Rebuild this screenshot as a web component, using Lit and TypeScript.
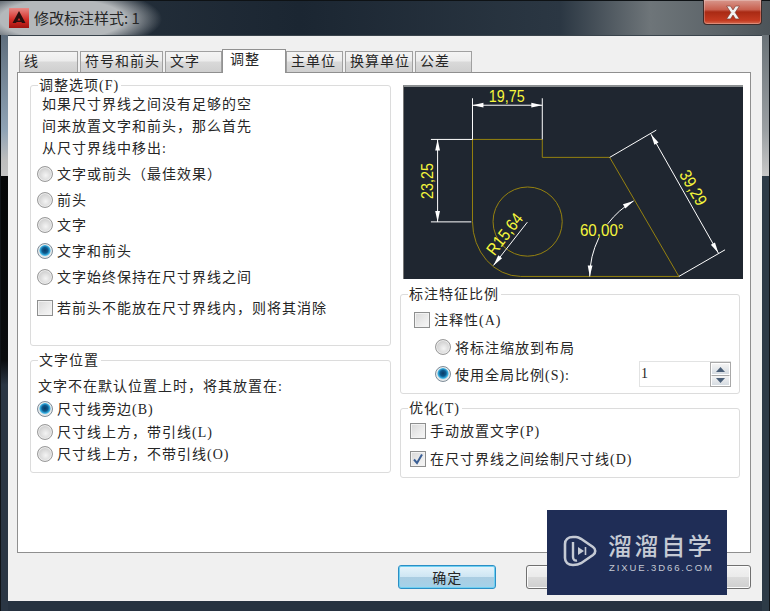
import { LitElement, html, css, svg } from "lit";
import { customElement } from "lit/decorators.js";

const TABS = [
  { label: "线", w: 59, gap: 2 },
  { label: "符号和前头", w: 83, gap: 2 },
  { label: "文字", w: 57, gap: 0 },
  { label: "调整", w: 64, gap: 0, active: true },
  { label: "主单位", w: 57, gap: 2 },
  { label: "换算单位", w: 68, gap: 2 },
  { label: "公差", w: 57, gap: 0 },
];

const arrow = (x: number, y: number, deg: number) =>
  svg`<polygon class="arr" points="0,0 -11,-2.4 -11,2.4" transform="translate(${x} ${y}) rotate(${deg})"></polygon>`;

@customElement("app-root")
export class AppRoot extends LitElement {
  static styles = css`
    :host {
      display: block;
      width: 770px;
      height: 611px;
      overflow: hidden;
      font-family: "Liberation Serif", "Noto Sans CJK SC", serif;
      font-size: 14px;
      letter-spacing: 1px;
      color: #262626;
    }
    * { box-sizing: border-box; }
    .window {
      position: relative;
      width: 770px;
      height: 611px;
      display: flex;
      flex-direction: column;
      background:
        linear-gradient(#101418 0 0) left / 1px 100% no-repeat,
        linear-gradient(#101418 0 0) right / 1px 100% no-repeat,
        linear-gradient(to bottom, transparent 0 35px, #5e6d7c 35px, #8fa3b5 130px, #bdbdbd 160px, #c4c4c4 176px, #050607 176px, #0a0c0e 360px, #2a3644 385px, #2a3644 100%) left / 8px 100% no-repeat,
        linear-gradient(to bottom, transparent 0 35px, #6b7378 35px, #9a9fa2 130px, #c8c8c8 176px, #2d3b47 176px, #2d3b47 100%) right / 8px 100% no-repeat,
        #263240;
    }
    .title {
      height: 35px;
      flex: none;
      display: flex;
      align-items: center;
      padding: 0 8px 0 9px;
      border-top: 1px solid #0e1215;
      background:
        radial-gradient(ellipse 100px 32px at 62px 18px, #b4b8bb 0 62%, rgba(180, 184, 187, 0) 100%),
        linear-gradient(to right, #28333e 0, #1b2632 300px, #2b3743 560px, #6e7579 650px, #5c6469 720px, #4c5459 770px);
    }
    .logo { width: 20px; height: 20px; flex: none; display: block; }
    .cap {
      margin-left: 5px;
      font-family: "Noto Sans CJK SC", sans-serif;
      font-size: 15px;
      letter-spacing: 0;
      color: #262626;
      line-height: 20px;
    }
    .close {
      margin-left: auto;
      align-self: flex-start;
      margin-top: -1px;
      width: 59px;
      height: 25px;
      border: 1px solid #3f2a28;
      border-top: none;
      border-radius: 0 0 4px 4px;
      box-shadow: inset 0 0 0 1px rgba(255, 255, 255, 0.25);
      background: linear-gradient(#d8978c 0, #c8604f 40%, #a92a14 50%, #c43a20 85%, #d66a50 100%);
      display: flex;
      align-items: center;
      justify-content: center;
    }
    .close svg { display: block; }
    .client {
      flex: 1;
      margin: 0 8px 10px;
      background: #f0f0f0;
      border-top: 1px solid #3a444c;
      padding: 13px 11px 0 9px;
      display: flex;
      flex-direction: column;
    }
    .tabs {
      display: flex;
      height: 24px;
      padding-left: 2px;
      flex: none;
      position: relative;
      z-index: 1;
    }
    .tab {
      height: 21px;
      margin-top: 2px;
      padding-left: 4px;
      line-height: 20px;
      white-space: nowrap;
      border: 1px solid #a0a0a0;
      border-bottom: none;
      background: linear-gradient(#f4f4f4 0, #ececec 45%, #d9d9d9 50%, #cfcfcf 100%);
    }
    .tab.active {
      height: 24px;
      margin-top: 0;
      padding-left: 7px;
      line-height: 19px;
      background: #fff;
      border-color: #919191;
    }
    .panel {
      height: 481px;
      margin-top: -1px;
      flex: none;
      border: 1px solid #8f8f8f;
      background: #fff;
      padding: 12px 0 0 12px;
      display: grid;
      grid-template-columns: 361px 340px;
      column-gap: 9px;
      align-content: start;
    }
    .col { display: flex; flex-direction: column; }
    .group {
      position: relative;
      border: 1px solid #dcdcdc;
      border-radius: 3px;
    }
    .legend {
      position: absolute;
      top: -10px;
      left: 7px;
      padding: 0 2px 0 1px;
      line-height: 20px;
      background: #fff;
      white-space: nowrap;
    }
    .g1 { height: 261px; padding-top: 8px; }
    .g2 { height: 113px; margin-top: 14px; padding-top: 15px; }
    .r1 { height: 100px; margin-top: 15px; padding-top: 12px; }
    .r2 { height: 70px; margin-top: 14px; padding-top: 8px; }
    .para { padding-left: 11px; line-height: 22px; white-space: nowrap; }
    .para2 { padding-left: 7px; line-height: 22px; white-space: nowrap; }
    .row {
      display: flex;
      align-items: center;
      gap: 4px;
      padding-left: 6px;
      white-space: nowrap;
    }
    .lbl { padding-bottom: 2px; }
    .in34 .lbl { padding-bottom: 0; }
    .h26 { height: 25.75px; }
    .h225 { height: 22.5px; }
    .h27 { height: 27px; }
    .h28 { height: 28px; }
    .first { margin-top: 1px; }
    .cbrow { margin-top: 5px; height: 26px; }
    .in13 { padding-left: 13px; }
    .in34 { padding-left: 34px; margin-top: 1px; }
    .in34 + .in34 { margin-top: 0; }
    .in9 { padding-left: 9px; }
    .radio {
      width: 16px;
      height: 16px;
      flex: none;
      border-radius: 50%;
      border: 1px solid #9a9a9a;
      background: radial-gradient(circle at 55% 60%, #f4f4f4 0, #d6d6d6 55%, #b8b8b8 100%);
      box-shadow: inset 0 0 0 1px #ececec;
    }
    .radio.on {
      border-color: #7f8d99;
      background: radial-gradient(circle at 50% 45%, #0b3c66 0, #0d5a8e 28%, #39b4e6 48%, #d8e4ea 58%, #dcdcdc 100%);
    }
    .check {
      width: 16px;
      height: 16px;
      flex: none;
      border: 1px solid #8e8f8f;
      background: linear-gradient(135deg, #d8d8d8 0, #ececec 60%, #f6f6f6 100%);
      box-shadow: inset 0 0 0 1px #f2f2f2;
      display: flex;
      align-items: center;
      justify-content: center;
    }
    .check svg { display: block; }
    .spin {
      margin-left: auto;
      margin-right: 8px;
      width: 92px;
      height: 26px;
      display: flex;
      border: 1px solid #e2e3e3;
      border-right: none;
      padding-left: 1px;
      line-height: 24px;
    }
    .spin span { flex: 1; }
    .stepper {
      width: 21px;
      height: 25px;
      flex: none;
      display: flex;
      flex-direction: column;
      border: 1px solid #a9a9a9;
    }
    .stepper i {
      flex: 1;
      display: flex;
      align-items: center;
      justify-content: center;
      background: linear-gradient(#f4f4f4, #d6dce2);
      border: 1px solid #fff;
    }
    .stepper i + i { border-top: 1px solid #a9a9a9; }
    .diagram {
      margin-left: 3px;
      width: 340px;
      height: 194px;
      display: block;
      background: #1f2630;
      border-top: 2px solid #8b8f91;
      border-left: 1px solid #777;
    }
    .oc { fill: none; stroke: #96820f; stroke-width: 1; }
    .dl { fill: none; stroke: #fff; stroke-width: 1; }
    .arr { fill: #fff; }
    .dt {
      fill: #f6f63c;
      font-family: "Liberation Sans", sans-serif;
      font-size: 17px;
      letter-spacing: 0;
      text-anchor: middle;
      dominant-baseline: middle;
    }
    .actions {
      display: flex;
      margin-top: 12px;
      padding-left: 381px;
      gap: 30px;
      flex: none;
    }
    .btn {
      width: 98px;
      height: 24px;
      border: 1px solid #707070;
      border-radius: 3px;
      background: linear-gradient(#f3f3f3 0, #ebebeb 48%, #dbdbdb 52%, #cfcfcf 100%);
      box-shadow: inset 0 0 0 1px #fbfbfb;
      text-align: center;
      text-indent: 1px;
      line-height: 22px;
      font-family: "Noto Sans CJK SC", sans-serif;
    }
    .btn.def {
      border-color: #2c8ec4;
      background: linear-gradient(#e6f4fb 0, #cfe6f3 48%, #aacde2 52%, #a4d2ea 100%);
      box-shadow: inset 0 0 0 1px #6fd0f2;
    }
    .water {
      position: absolute;
      left: 547px;
      top: 510px;
      width: 180px;
      height: 85px;
      background: #1f2d56;
      color: #c5cad4;
    }
    .water svg { position: absolute; left: 15px; top: 25px; display: block; }
    .wbig {
      position: absolute;
      left: 61px;
      top: 19px;
      font-family: "Noto Sans CJK SC", sans-serif;
      font-size: 24px;
      font-weight: 500;
      line-height: 32px;
      letter-spacing: 2.6px;
      white-space: nowrap;
    }
    .wsmall {
      position: absolute;
      left: 62px;
      top: 52px;
      font-family: "Liberation Sans", sans-serif;
      font-size: 9.5px;
      line-height: 12px;
      letter-spacing: 1.9px;
      white-space: nowrap;
    }
  `;

  private radio(label: string, on: boolean, cls: string) {
    return html`<div class="row ${cls}"><span class="radio ${on ? "on" : ""}"></span><span class="lbl">${label}</span></div>`;
  }

  private check(label: string, on: boolean, cls: string) {
    return html`<div class="row ${cls}">
      <span class="check">${on
        ? html`<svg width="12" height="12" viewBox="0 0 12 12"><path d="M2 6.5 L5 10 L10 1.5" fill="none" stroke="#3a5f95" stroke-width="2"></path></svg>`
        : ""}</span><span class="lbl">${label}</span>
    </div>`;
  }

  private diagram() {
    return html`<svg class="diagram" viewBox="403 87 340 192">
      <path class="oc" d="M471.7 139.3 H541.7 V157.3 H609.3 L678.7 276.7 H520 A48.5 55 0 0 1 471.7 221.7 Z"></path>
      <circle class="oc" cx="527" cy="221.7" r="34.7"></circle>
      <path class="dl" d="M471.7 98 V139.3 M541.7 98 V139.3 M471.7 105 H541.7 M430 139.3 H471.7 M430 222 H470.5 M436.7 139.3 V222
        M609.3 157.3 L656 130 M678.7 276.7 L725 250 M650.7 134 L718.3 253.3 M526.7 222.3 L492.7 265.7
        M633.3 201 A88 88 0 0 0 607.3 224 M598.3 238.3 A88 88 0 0 0 589.3 276.7"></path>
      ${arrow(471.7, 105, 180)}${arrow(541.7, 105, 0)}
      ${arrow(436.7, 139.3, 270)}${arrow(436.7, 222, 90)}
      ${arrow(650.7, 134, 240)}${arrow(718.3, 253.3, 60)}
      ${arrow(492.7, 265.7, 128)}
      ${arrow(633.3, 201, -30)}${arrow(589.3, 276.7, 92)}
      <text class="dt" x="506" y="97" textLength="36" lengthAdjust="spacingAndGlyphs">19,75</text>
      <text class="dt" transform="translate(427.5 181) rotate(-90)" textLength="36" lengthAdjust="spacingAndGlyphs">23,25</text>
      <text class="dt" transform="translate(692 188.5) rotate(60)" textLength="38" lengthAdjust="spacingAndGlyphs">39,29</text>
      <text class="dt" transform="translate(505 235) rotate(-52)" textLength="48" lengthAdjust="spacingAndGlyphs">R15,64</text>
      <text class="dt" x="601.5" y="232" textLength="44" lengthAdjust="spacingAndGlyphs">60,00°</text>
    </svg>`;
  }

  render() {
    return html`<div class="window">
      <div class="title">
        <svg class="logo" viewBox="0 0 20 20">
          <defs>
            <linearGradient id="lg" x1="0" y1="0" x2="0" y2="1">
              <stop offset="0" stop-color="#e88a86"></stop>
              <stop offset="0.6" stop-color="#d42a24"></stop>
              <stop offset="1" stop-color="#a01410"></stop>
            </linearGradient>
          </defs>
          <rect width="20" height="20" fill="url(#lg)"></rect>
          <path d="M10 3 L16.5 15 L13 15 L10 10 L7 15 L3.5 15 Z M7.5 12.5 H12.5 V14 H7.5 Z" fill="#2a0f0e"></path>
        </svg>
        <span class="cap">修改标注样式: 1</span>
        <div class="close">
          <svg width="18" height="15" viewBox="0 0 16 14">
            <path d="M2 1 H5.6 L8 4.6 L10.4 1 H14 L10 7 L14 13 H10.4 L8 9.4 L5.6 13 H2 L6 7 Z" fill="#f2f2f2" stroke="#7b3a30" stroke-width="0.6"></path>
          </svg>
        </div>
      </div>
      <div class="client">
        <div class="tabs">
          ${TABS.map(
            (t) => html`<div
              class="tab ${t.active ? "active" : ""}"
              style="width:${t.w}px;margin-right:${t.gap}px"
            >${t.label}</div>`
          )}
        </div>
        <div class="panel">
          <div class="col">
            <div class="group g1">
              <div class="legend">调整选项(F)</div>
              <div class="para">如果尺寸界线之间没有足够的空</div>
              <div class="para">间来放置文字和前头，那么首先</div>
              <div class="para">从尺寸界线中移出:</div>
              ${this.radio("文字或前头（最佳效果）", false, "h26 first")}
              ${this.radio("前头", false, "h26")}
              ${this.radio("文字", false, "h26")}
              ${this.radio("文字和前头", true, "h26")}
              ${this.radio("文字始终保持在尺寸界线之间", false, "h26")}
              ${this.check("若前头不能放在尺寸界线内，则将其消除", false, "cbrow")}
            </div>
            <div class="group g2">
              <div class="legend">文字位置</div>
              <div class="para2">文字不在默认位置上时，将其放置在:</div>
              ${this.radio("尺寸线旁边(B)", true, "h225")}
              ${this.radio("尺寸线上方，带引线(L)", false, "h225")}
              ${this.radio("尺寸线上方，不带引线(O)", false, "h225")}
            </div>
          </div>
          <div class="col">
            ${this.diagram()}
            <div class="group r1">
              <div class="legend">标注特征比例</div>
              ${this.check("注释性(A)", false, "h26 in13")}
              ${this.radio("将标注缩放到布局", false, "h27 in34")}
              <div class="row h27 in34">
                <span class="radio on"></span><span class="lbl">使用全局比例(S):</span>
                <div class="spin">
                  <span>1</span>
                  <div class="stepper">
                    <i><svg width="9" height="5" viewBox="0 0 9 5"><path d="M4.5 0 L9 5 H0 Z" fill="#4a5f78"></path></svg></i>
                    <i><svg width="9" height="5" viewBox="0 0 9 5"><path d="M0 0 H9 L4.5 5 Z" fill="#4a5f78"></path></svg></i>
                  </div>
                </div>
              </div>
            </div>
            <div class="group r2">
              <div class="legend">优化(T)</div>
              ${this.check("手动放置文字(P)", false, "h28 in9")}
              ${this.check("在尺寸界线之间绘制尺寸线(D)", true, "h28 in9")}
            </div>
          </div>
        </div>
        <div class="actions">
          <div class="btn def">确定</div>
          <div class="btn"></div>
          <div class="btn"></div>
        </div>
      </div>
      <div class="water">
        <svg width="36" height="32" viewBox="0 0 36 32">
          <path d="M11 2 H14 C16 2 17 2.5 19 3.8 L31 12 C34 14.2 34 17.8 31 20 L19 28.2 C16 30 13 30 11 30 C6 30 3 27 3 23 V9 C3 5 6 2 11 2 Z" fill="none" stroke="#c5cad4" stroke-width="2.6"></path>
          <path d="M11 7 V22 C11 25 13 26 15 25.5" fill="none" stroke="#c5cad4" stroke-width="2.4"></path>
          <path d="M16 12 L22 16 L16 20 Z" fill="#c5cad4"></path>
          <path d="M23.5 12 V20" stroke="#c5cad4" stroke-width="1.6"></path>
        </svg>
        <div class="wbig">溜溜自学</div>
        <div class="wsmall">ZIXUE.3D66.COM</div>
      </div>
    </div>`;
  }
}
